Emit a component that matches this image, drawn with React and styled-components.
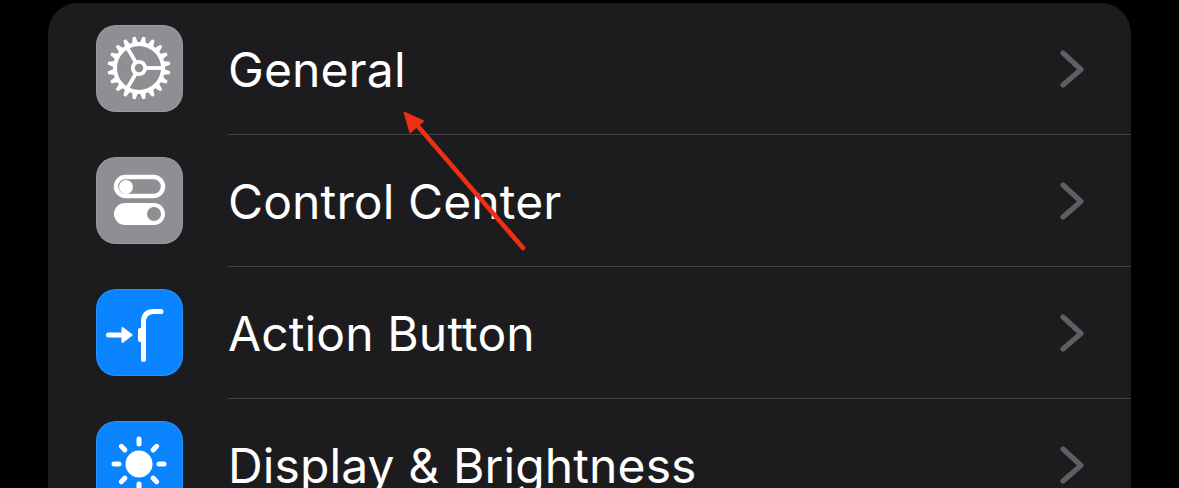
import React from "react";
import styled, { createGlobalStyle } from "styled-components";

const Global = createGlobalStyle`
  html, body { margin: 0; padding: 0; background: #000; overflow: hidden; height: 100%; }
  #root { height: 488px; }
`;

const Page = styled.main`
  position: relative;
  height: 488px;
  overflow: hidden;
  background: #000;
  padding: 3px 48px 0;
  box-sizing: border-box;
  font-family: Inter, "Noto Sans", sans-serif;
`;

const Panel = styled.section`
  background: #1c1c1e;
  border-radius: 30px 30px 0 0;
  height: 520px;
  display: flex;
  flex-direction: column;
`;

const Row = styled.div`
  display: flex;
  align-items: stretch;
  flex: none;
  height: 132px;
  padding-left: 48px;
`;

const IconBox = styled.div`
  flex: none;
  width: 87px;
  height: 87px;
  margin-top: 22px;
  margin-right: 45px;
  border-radius: 20px;
  background: ${(p) => p.$bg};
  box-shadow: inset 0 0 0 1px rgba(255, 255, 255, 0.12);
  svg { display: block; }
`;

const RowBody = styled.div`
  flex: 1;
  display: flex;
  align-items: center;
  justify-content: space-between;
  height: 131px;
  padding-right: 47px;
  border-bottom: 1px solid #434346;
`;

const Label = styled.span`
  color: #fff;
  font-size: 48px;
  font-weight: 400;
  letter-spacing: 0.12px;
  padding-top: 2px;
  white-space: nowrap;
`;

const Arrow = styled.svg`
  position: absolute;
  left: 395px;
  top: 100px;
  pointer-events: none;
`;

const gearPath = (() => {
  const cx = 43;
  const cy = 43;
  const n = 20;
  const pts = [];
  const pt = (r, deg) => {
    const t = (deg * Math.PI) / 180;
    return `${(cx + r * Math.cos(t)).toFixed(2)} ${(cy + r * Math.sin(t)).toFixed(2)}`;
  };
  for (let i = 0; i < n; i += 1) {
    const a = (i * 360) / n + 9;
    pts.push(pt(26, a - 9), pt(26, a - 6), pt(31.5, a - 2.6), pt(31.5, a + 2.6), pt(26, a + 6));
  }
  return `M${pts.join("L")}Z`;
})();

const GearIcon = () => (
  <svg width="87" height="87" viewBox="0 0 87 87">
    <path d={gearPath} fill="#fff" />
    <circle cx="43" cy="43" r="22" fill="#8e8e93" />
    <g stroke="#fff" fill="none" strokeWidth="3.8">
      {[0, 120, 240].map((a) => (
        <line key={a} x1="49" y1="43" x2="66" y2="43" transform={`rotate(${a} 43 43)`} />
      ))}
      <circle cx="43" cy="43" r="6.2" />
    </g>
  </svg>
);

const ToggleIcon = () => (
  <svg width="87" height="87" viewBox="0 0 87 87">
    <rect x="20" y="20" width="47" height="19" rx="9.5" fill="none" stroke="#fff" strokeWidth="4.4" />
    <circle cx="30" cy="30" r="7" fill="#fff" />
    <rect x="18" y="46" width="51" height="22" rx="11" fill="#fff" />
    <circle cx="58" cy="57" r="7" fill="#8e8e93" />
  </svg>
);

const ActionIcon = () => (
  <svg width="87" height="87" viewBox="0 0 87 87">
    <path d="M12.5 46H30" stroke="#fff" strokeWidth="5" strokeLinecap="round" fill="none" />
    <path d="M26.5 39l9 7-9 7z" fill="#fff" stroke="#fff" strokeWidth="2" strokeLinejoin="round" />
    <path d="M47.5 70.5V33Q47.5 22.5 58 22.5H65" stroke="#fff" strokeWidth="5" strokeLinecap="round" fill="none" />
    <rect x="42" y="39" width="6" height="14" rx="2" fill="#fff" />
  </svg>
);

const SunIcon = () => (
  <svg width="87" height="87" viewBox="0 0 87 87">
    <circle cx="43" cy="43" r="13.5" fill="#fff" />
    {[0, 45, 90, 135, 180, 225, 270, 315].map((a) => (
      <line key={a} x1="43" y1="23" x2="43" y2="18" stroke="#fff" strokeWidth="5" strokeLinecap="round" transform={`rotate(${a} 43 43)`} />
    ))}
  </svg>
);

const Chevron = () => (
  <svg width="24" height="38" viewBox="0 0 24 38">
    <path d="M3 3l18 16.5L3 35" fill="none" stroke="#5e5e63" strokeWidth="5.2" strokeLinecap="round" strokeLinejoin="round" />
  </svg>
);

const rows = [
  { label: "General", bg: "#8e8e93", Icon: GearIcon },
  { label: "Control Center", bg: "#8e8e93", Icon: ToggleIcon },
  { label: "Action Button", bg: "#0a84ff", Icon: ActionIcon },
  { label: "Display & Brightness", bg: "#0a84ff", Icon: SunIcon },
];

export default function App() {
  return (
    <Page>
      <Global />
      <Panel>
        {rows.map(({ label, bg, Icon }) => (
          <Row key={label}>
            <IconBox $bg={bg}><Icon /></IconBox>
            <RowBody>
              <Label>{label}</Label>
              <Chevron />
            </RowBody>
          </Row>
        ))}
      </Panel>
      <Arrow width="140" height="160" viewBox="0 0 140 160">
        <path d="M128 148L21 24" stroke="#ee2f14" strokeWidth="4.6" strokeLinecap="round" fill="none" />
        <path d="M9 12L29 21 15 33z" fill="#ee2f14" stroke="#ee2f14" strokeWidth="1" strokeLinejoin="round" />
      </Arrow>
    </Page>
  );
}
